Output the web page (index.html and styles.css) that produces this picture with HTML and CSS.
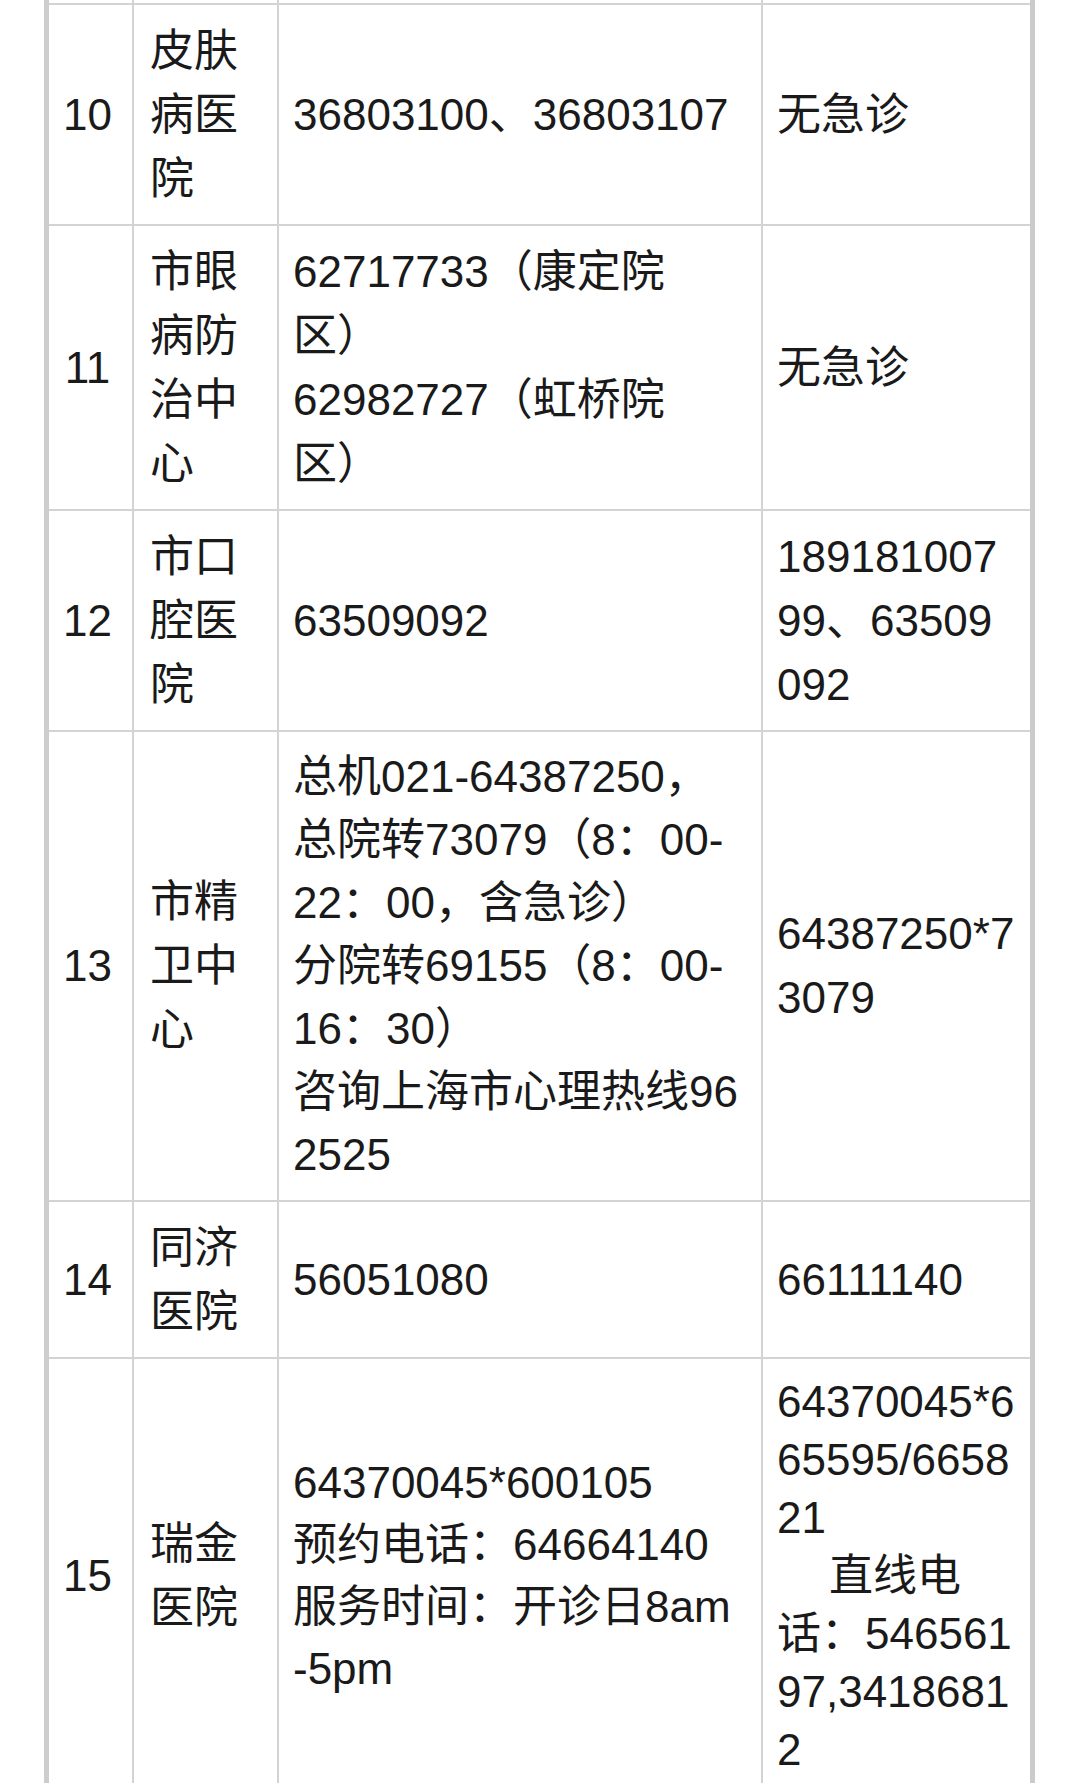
FILE: index.html
```html
<!DOCTYPE html>
<html lang="zh-CN">
<head>
<meta charset="utf-8">
<title>医院咨询电话</title>
<link rel="stylesheet" href="styles.css">
</head>
<body>
<table class="hosp">
  <colgroup>
    <col class="c-no">
    <col class="c-name">
    <col class="c-tel">
    <col class="c-er">
  </colgroup>
  <tr class="sliver"><td></td><td></td><td></td><td></td></tr>
  <tr>
    <td class="no">10</td>
    <td class="name">皮肤<br>病医<br>院</td>
    <td class="tel">36803100、36803107</td>
    <td class="er">无急诊</td>
  </tr>
  <tr>
    <td class="no">11</td>
    <td class="name">市眼<br>病防<br>治中<br>心</td>
    <td class="tel">62717733（康定院<br>区）<br>62982727（虹桥院<br>区）</td>
    <td class="er">无急诊</td>
  </tr>
  <tr>
    <td class="no">12</td>
    <td class="name">市口<br>腔医<br>院</td>
    <td class="tel">63509092</td>
    <td class="er">189181007<br>99、63509<br>092</td>
  </tr>
  <tr class="tight">
    <td class="no">13</td>
    <td class="name">市精<br>卫中<br>心</td>
    <td class="tel lh-63">总机021-64387250，<br>总院转73079（8：00-<br>22：00，含急诊）<br>分院转69155（8：00-<br>16：30）<br>咨询上海市心理热线96<br>2525</td>
    <td class="er">64387250*7<br>3079</td>
  </tr>
  <tr>
    <td class="no">14</td>
    <td class="name">同济<br>医院</td>
    <td class="tel">56051080</td>
    <td class="er">66111140</td>
  </tr>
  <tr>
    <td class="no">15</td>
    <td class="name">瑞金<br>医院</td>
    <td class="tel lh-62">64370045*600105<br>预约电话：64664140<br>服务时间：开诊日8am<br>-5pm</td>
    <td class="er lh-58">64370045*6<br>65595/6658<br>21<br><span class="indent">直线电</span><br>话：546561<br>97,3418681<br>2</td>
  </tr>
</table>
</body>
</html>
```

FILE: styles.css
```css
html, body {
  margin: 0;
  padding: 0;
  background: #ffffff;
}

body {
  color: #1a1a1a;
  font-family: "Liberation Sans", "Noto Sans CJK SC", sans-serif;
  font-size: 44px;
}

.hosp {
  margin-left: 44px;
  width: 991px;
  table-layout: fixed;
  border-collapse: separate;
  border-spacing: 0;
  border-left: 5px solid #cdcdcd;
  border-right: 5px solid #cbcbcb;
}

.c-no { width: 85px; }
.c-name { width: 145px; }
.c-tel { width: 484px; }
.c-er { width: 267px; }

.hosp td {
  box-sizing: border-box;
  border-right: 2px solid #d3d3d3;
  border-bottom: 2px solid #d3d3d3;
  padding: 14px 10px 13px 14px;
  line-height: 64px;
  vertical-align: middle;
  white-space: nowrap;
}

.hosp td:last-child {
  border-right: none;
}

.sliver td {
  padding: 0;
  height: 5px;
  line-height: 0;
  font-size: 0;
}

.hosp td.no {
  text-align: center;
  padding-left: 0;
  padding-right: 6px;
}

.hosp td.name {
  padding-left: 16px;
  padding-right: 4px;
}

.hosp .tight td {
  padding-top: 13px;
  padding-bottom: 14px;
}

.hosp td.lh-63 {
  line-height: 63px;
}

.hosp td.lh-62 {
  line-height: 62px;
}

.hosp td.lh-58 {
  line-height: 58px;
}

.indent {
  padding-left: 52px;
}
```
